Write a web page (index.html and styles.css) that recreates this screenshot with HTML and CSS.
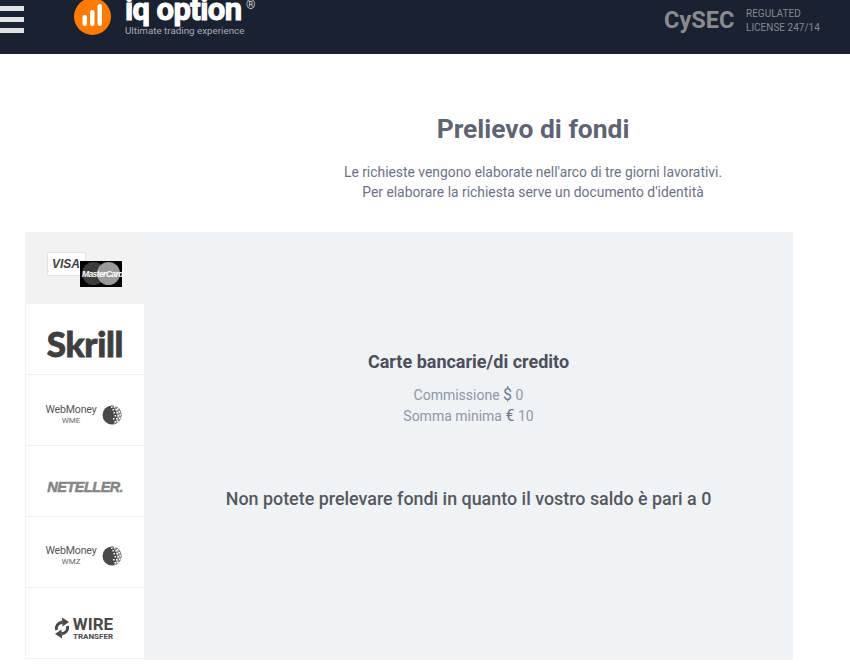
FILE: index.html
```html
<!DOCTYPE html>
<html lang="it">

<head>
    <meta charset="UTF-8">
    <title>Prelievo di fondi</title>
    <link rel="stylesheet" href="styles.css">
</head>

<body>
    <header class="header">
        <div class="menu"><span></span><span></span><span></span></div>
        <svg class="logo-mark" width="37" height="37" viewBox="0 0 37 37">
            <circle cx="18.5" cy="18.5" r="18.5" fill="#ff7a00"/>
            <rect x="8.5" y="17" width="4.5" height="11" rx="2.2" fill="#fff"/>
            <rect x="16" y="12" width="4.5" height="16" rx="2.2" fill="#fff"/>
            <rect x="23.5" y="6" width="4.5" height="22" rx="2.2" fill="#fff"/>
        </svg>
        <div class="logo-text">
            <div class="logo-name">iq option</div>
            <div class="logo-sub">Ultimate trading experience</div>
            <span class="logo-reg">®</span>
        </div>
        <div class="cysec">CySEC</div>
        <div class="license">REGULATED<br>LICENSE 247/14</div>
    </header>

    <section class="intro">
        <h1 class="title">Prelievo di fondi</h1>
        <p class="note">Le richieste vengono elaborate nell'arco di tre giorni lavorativi.<br>Per elaborare la richiesta serve un documento d'identità</p>
    </section>

    <div class="cashier">
        <ul class="methods">
            <li class="method on">
                <div class="cards">
                    <span class="visa">VISA</span>
                    <span class="mc">
                        <i class="mc-a"></i><i class="mc-b"></i>
                        <b>MasterCard</b>
                    </span>
                </div>
            </li>
            <li class="method"><span class="skrill">Skrill</span></li>
            <li class="method">
                <div class="wm">
                    <div class="wm-text">WebMoney<small>WME</small></div>
                    <svg class="wm-globe" width="20" height="22" viewBox="0 0 20 22">
                        <use href="#globe"/>
                    </svg>
                </div>
            </li>
            <li class="method"><span class="neteller">NETELLER<em>.</em></span></li>
            <li class="method">
                <div class="wm wm-low">
                    <div class="wm-text">WebMoney<small>WMZ</small></div>
                    <svg class="wm-globe" width="20" height="22" viewBox="0 0 20 22">
                        <use href="#globe"/>
                    </svg>
                </div>
            </li>
            <li class="method">
                <div class="wire">
                    <svg width="16" height="22" viewBox="0 0 16 22">
                        <path d="M2.500 13 C1.500 9 4 6 8.500 5" fill="none" stroke="#4a4a4a" stroke-width="3"/>
                        <path d="M8 0.500 L15 5 L8.500 9.500 Z" fill="#4a4a4a"/>
                        <path d="M13.500 9 C14.500 13 12 16 7.500 17" fill="none" stroke="#4a4a4a" stroke-width="3"/>
                        <path d="M8 21.500 L1 17 L7.500 12.500 Z" fill="#4a4a4a"/>
                    </svg>
                    <div class="wire-text">WIRE<small>TRANSFER</small></div>
                </div>
            </li>
        </ul>
        <div class="panel">
            <h2 class="panel-title">Carte bancarie/di credito</h2>
            <div class="fee">Commissione <b>$</b>&nbsp;<span>0</span></div>
            <div class="fee">Somma minima <b>€</b> <span>10</span></div>
            <p class="warning">Non potete prelevare fondi in quanto il vostro saldo è pari a 0</p>
        </div>
    </div>

    <svg width="0" height="0" class="defs">
        <defs>
            <g id="globe">
                <circle cx="10" cy="11" r="9.500" fill="#4a4a4a"/>
                <path d="M9 1.500 A9.500 9.500 0 0 1 19.500 11 A9.500 9.500 0 0 1 11 20.500 A12 12 0 0 0 9 1.500 Z" fill="#8a8a8a"/>
                <g fill="#fff">
                    <rect x="9" y="2.500" width="1.500" height="1.500"/><rect x="12" y="2" width="1.500" height="1.500"/><rect x="15" y="4" width="1.500" height="1.500"/>
                    <rect x="10.500" y="5" width="1.500" height="1.500"/><rect x="13.500" y="5" width="1.500" height="1.500"/><rect x="16.500" y="7" width="1.500" height="1.500"/>
                    <rect x="11.500" y="8" width="1.500" height="1.500"/><rect x="14.500" y="8" width="1.500" height="1.500"/><rect x="17.500" y="10" width="1.500" height="1.500"/>
                    <rect x="12.500" y="11" width="1.500" height="1.500"/><rect x="15.500" y="11" width="1.500" height="1.500"/><rect x="17" y="13.500" width="1.500" height="1.500"/>
                    <rect x="11" y="14" width="1.500" height="1.500"/><rect x="14" y="14" width="1.500" height="1.500"/><rect x="12.500" y="17" width="1.500" height="1.500"/><rect x="15" y="16.500" width="1.500" height="1.500"/>
                </g>
            </g>
        </defs>
    </svg>
</body>

</html>
```

FILE: styles.css
```css
* {
    margin: 0;
    padding: 0;
}
body {
    font-family: Roboto, "Liberation Sans", sans-serif;
    background: #fff;
    overflow: hidden;
}
ul {
    list-style: none;
}

.header {
    height: 54px;
    background: #1a2130;
    display: flex;
    align-items: flex-start;
    overflow: hidden;
}
.menu {
    width: 24px;
    padding-top: 6px;
    display: flex;
    flex-direction: column;
    gap: 6px;
}
.menu span {
    display: block;
    height: 5px;
    background: #e2e2e2;
}
.logo-mark {
    margin: -2px 0 0 50px;
    flex: none;
}
.logo-text {
    position: relative;
    margin-left: 14px;
    width: 131px;
}
.logo-name {
    font-size: 31px;
    line-height: 20px;
    height: 20px;
    font-weight: 700;
    color: #fff;
    letter-spacing: -0.6px;
    white-space: nowrap;
    -webkit-text-stroke: 1px #fff;
}
.logo-sub {
    padding-top: 5px;
    font-size: 9.800px;
    line-height: 11px;
    color: #a9abb0;
    white-space: nowrap;
}
.logo-reg {
    position: absolute;
    left: 121px;
    top: 0;
    font-size: 12px;
    line-height: 10px;
    color: #c9c9c9;
}
.cysec {
    margin-left: 408px;
    padding-top: 7px;
    width: 82px;
    font-size: 23.500px;
    line-height: 27px;
    font-weight: 700;
    color: #8a8b8d;
}
.license {
    padding-top: 7px;
    font-size: 10px;
    line-height: 14px;
    color: #87898d;
    white-space: nowrap;
}

.intro {
    padding-left: 216px;
    text-align: center;
    height: 178px;
}
.title {
    padding-top: 59px;
    font-size: 26.400px;
    line-height: 32px;
    font-weight: 700;
    color: #5f6475;
}
.note {
    margin-top: 17px;
    font-size: 13.860px;
    line-height: 20px;
    color: #6c7287;
}

.cashier {
    display: flex;
    margin-left: 25px;
    width: 768px;
    height: 428px;
}
.methods {
    width: 119px;
    flex: none;
}
.method {
    height: 71px;
    box-sizing: border-box;
    border-bottom: 1px solid #eff1f3;
    border-left: 1px solid #f4f5f6;
    display: flex;
    align-items: center;
    justify-content: center;
}
.method.on {
    height: 72px;
    background: #f2f2f2;
    border-color: #f2f2f2;
}

.cards {
    position: relative;
    width: 76px;
    height: 36px;
    margin-top: 5px;
}
.visa {
    position: absolute;
    left: 0;
    top: 0;
    width: 39px;
    height: 24px;
    box-sizing: border-box;
    border: 1px solid #e3e3e3;
    background: #fff;
    padding: 5px 0 0 4px;
    font: italic 700 12px/12px "Liberation Sans", sans-serif;
    color: #3f3f46;
}
.mc {
    position: absolute;
    left: 33px;
    top: 9px;
    width: 42px;
    height: 26px;
    background: #000;
}
.mc-a, .mc-b {
    position: absolute;
    top: 1px;
    width: 23px;
    height: 23px;
    border-radius: 50%;
}
.mc-a {
    left: 2px;
    background: #3c3c3c;
}
.mc-b {
    left: 17px;
    background: #9a9a9a;
}
.mc b {
    position: absolute;
    left: 2px;
    top: 8px;
    font: italic 700 8.500px/11px "Liberation Sans", sans-serif;
    letter-spacing: -0.6px;
    color: #fff;
}

.skrill {
    margin-top: 8px;
    font-family: Lato, Roboto, sans-serif;
    font-size: 35px;
    line-height: 34px;
    font-weight: 900;
    color: #3f3f3f;
    letter-spacing: -0.3px;
    -webkit-text-stroke: 0.8px #3f3f3f;
}

.wm {
    display: flex;
    align-items: center;
    gap: 6px;
    margin: 8px 0 0 -2px;
}
.wm-low {
    margin-top: 6px;
}
.wm-text {
    font-size: 10.600px;
    line-height: 13px;
    color: #555;
    text-align: center;
    letter-spacing: -0.2px;
}
.wm-text small {
    display: block;
    font-size: 8px;
    line-height: 10px;
    color: #666;
    letter-spacing: 0;
}
.wm-globe {
    flex: none;
    margin-top: 2px;
}

.neteller {
    margin-top: 12px;
    font-family: "Liberation Sans", sans-serif;
    font-size: 14.500px;
    line-height: 18px;
    font-weight: 700;
    font-style: italic;
    color: #858585;
    letter-spacing: -0.5px;
    -webkit-text-stroke: 0.5px #858585;
}
.neteller em {
    font-size: 12px;
}

.wire {
    display: flex;
    align-items: center;
    gap: 3px;
    margin: 10px 0 0 -3px;
}
.wire-text {
    font-size: 17px;
    line-height: 16px;
    font-weight: 700;
    color: #4a4a4a;
    text-align: center;
}
.wire-text small {
    display: block;
    font-size: 8px;
    line-height: 9px;
    letter-spacing: 0;
}

.panel {
    flex: 1;
    background: #eff3f6;
    text-align: center;
}
.panel-title {
    padding-top: 118px;
    font-size: 18px;
    line-height: 24px;
    font-weight: 700;
    color: #4c4f5a;
}
.fee {
    font-size: 14px;
    line-height: 21px;
    color: #8f96a8;
}
.fee:nth-of-type(1) {
    margin-top: 11px;
}
.fee b {
    font-weight: 400;
    font-size: 16px;
    line-height: 1;
    color: #70778a;
}
.warning {
    margin-top: 60px;
    font-size: 17.900px;
    line-height: 24px;
    font-weight: 500;
    color: #55585f;
}
.defs {
    position: absolute;
}
```
